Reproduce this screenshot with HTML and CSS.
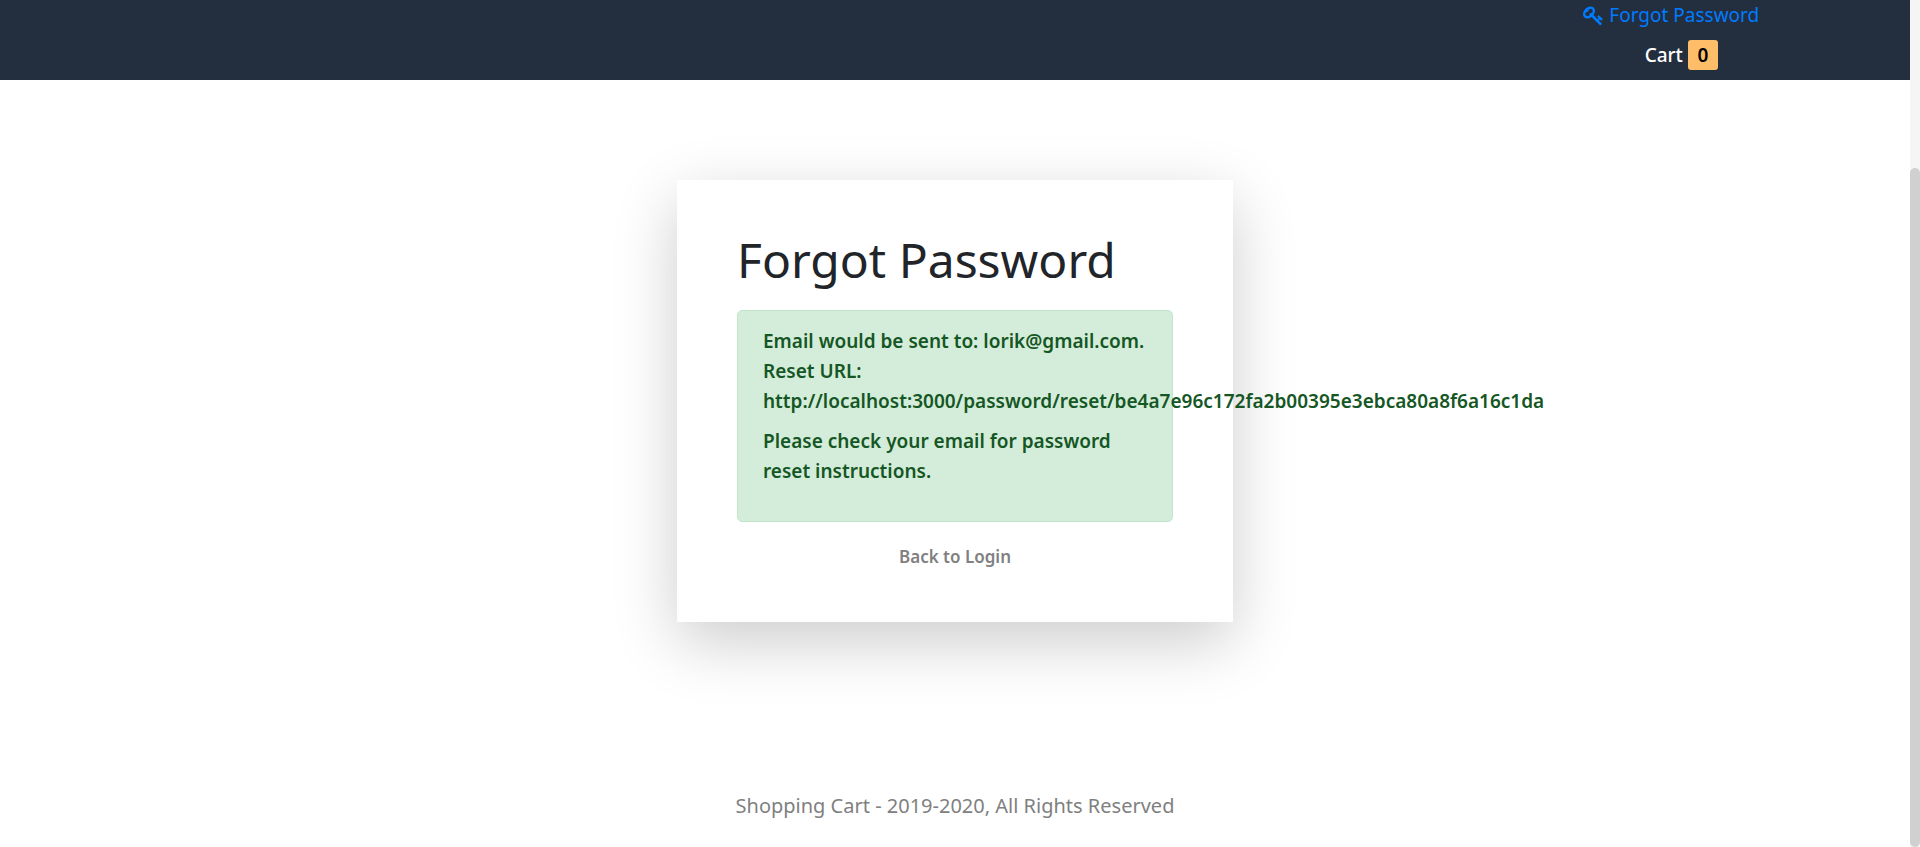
FILE: index.html
```html
<!DOCTYPE html>
<html lang="en">
<head>
<meta charset="utf-8">
<title>Forgot Password</title>
<link rel="stylesheet" href="styles.css">
</head>
<body>
<div class="page">
  <header class="navbar">
    <nav class="nav-actions">
      <a class="nav-link" href="#">
        <svg class="key-icon" viewBox="0 0 1792 1792" aria-hidden="true"><path fill="currentColor" d="M832 512q0-80-56-136t-136-56-136 56-56 136q0 42 19 83-41-19-83-19-80 0-136 56t-56 136 56 136 136 56 136-56 56-136q0-42-19-83 41 19 83 19 80 0 136-56t56-136zm851 704q0 17-49 66t-66 49q-9 0-28.500-16t-36.500-33-38.500-40-24.500-26l-96 96 220 220q28 28 28 68 0 42-39 81t-81 39q-40 0-68-28l-671-671q-176 131-365 131-163 0-265.500-102.500t-102.500-265.500q0-160 95-313t248-248 313-95q163 0 265.500 102.500t102.500 265.500q0 189-131 365l355 355 96-96q-3-3-26-24.500t-40-38.500-33-36.500-16-28.500q0-17 49-66t66-49q13 0 23 10 6 6 46 44.500t82 79.500 86.500 86 73 78 28.500 41z"/></svg>
        <span>Forgot Password</span>
      </a>
      <a class="cart" href="#"><span>Cart</span><span class="cart-count">0</span></a>
    </nav>
  </header>
  <main class="content">
    <section class="card">
      <h1 class="title">Forgot Password</h1>
      <div class="alert" role="alert">
        <p class="alert-text">Email would be sent to: lorik@gmail.com.<br>Reset URL:<br>http://localhost:3000/password/reset/be4a7e96c172fa2b00395e3ebca80a8f6a16c1da</p>
        <p class="alert-text">Please check your email for password reset instructions.</p>
      </div>
      <a class="back-link" href="#">Back to Login</a>
    </section>
  </main>
  <footer class="footer">Shopping Cart - 2019-2020, All Rights Reserved</footer>
</div>
<div class="scroll-track" aria-hidden="true"><div class="scroll-thumb"></div></div>
</body>
</html>
```
FILE: styles.css
```css
* { box-sizing: border-box; }

body {
  margin: 0;
  min-height: 100vh;
  display: flex;
  background: #fff;
  color: #212529;
  font-family: "Noto Sans", "Open Sans", sans-serif;
  font-size: 19px;
  line-height: 30px;
}

a { text-decoration: none; }

.page {
  flex: 1;
  min-width: 0;
  display: flex;
  flex-direction: column;
}

.navbar {
  display: flex;
  justify-content: flex-end;
  padding-bottom: 10px;
  background: #232f3e;
}

.nav-actions {
  width: 25%;
  display: flex;
  flex-direction: column;
  align-items: center;
  gap: 10px;
}

.nav-link {
  display: flex;
  align-items: center;
  gap: 5px;
  color: #007bff;
}

.key-icon { width: 21px; height: 21px; }

.cart {
  display: flex;
  gap: 5px;
  margin-left: 20px;
  color: #fff;
  font-weight: 500;
}

.cart-count {
  width: 30px;
  border-radius: 3px;
  background: #febd69;
  color: #000;
  font-weight: 600;
  text-align: center;
}

.content {
  display: flex;
  justify-content: center;
  padding: 100px 20px;
}

.card {
  width: 100%;
  max-width: 556px;
  padding: 50px 60px;
  background: #fff;
  box-shadow: 0 20px 60px rgba(0, 0, 0, 0.2);
}

.title {
  margin: 0 0 20px;
  font-size: 48px;
  font-weight: 400;
  line-height: 60px;
  white-space: nowrap;
}

.alert {
  margin-bottom: 20px;
  padding: 15px 25px 35px;
  border: 1px solid #c3e6cb;
  border-radius: 5px;
  background: #d4edda;
  color: #155724;
  font-weight: 600;
}

.alert-text { margin: 0; }
.alert-text + .alert-text { margin-top: 10px; }

.back-link {
  display: block;
  color: #808080;
  font-size: 17px;
  font-weight: 600;
  text-align: center;
}

.footer {
  padding: 69px 20px 26px;
  color: #808080;
  font-size: 20px;
  text-align: center;
}

.scroll-track {
  width: 10px;
  display: flex;
  padding-top: 168px;
  background: #f5f5f5;
}

.scroll-thumb {
  flex: 1;
  border-radius: 5px;
  background: #d0d0d0;
}
```
